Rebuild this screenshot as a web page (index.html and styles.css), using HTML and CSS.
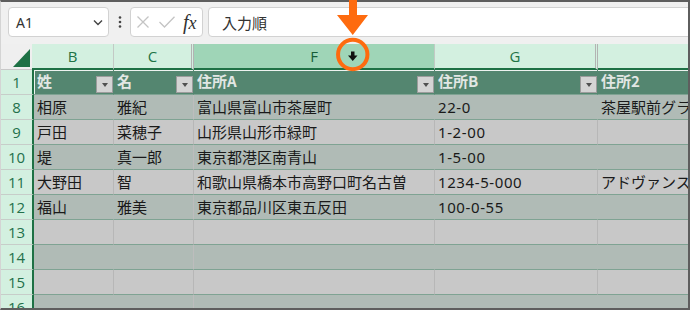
FILE: index.html
```html
<!DOCTYPE html>
<html lang="ja">
<head>
<meta charset="utf-8">
<link rel="stylesheet" href="styles.css">
</head>
<body>
<div class="stage">
  <div class="app">
    <div class="fbar">
      <div class="namebox"><span class="ref">A1</span><svg class="chev" width="10" height="7" viewBox="0 0 10 7"><polyline points="1,1.5 5,5.5 9,1.5" fill="none" stroke="#444" stroke-width="1.4"/></svg></div>
      <div class="dots"><svg width="4" height="12" viewBox="0 0 4 12"><circle cx="2" cy="1.5" r="1.3" fill="#444"/><circle cx="2" cy="6" r="1.3" fill="#444"/><circle cx="2" cy="10.5" r="1.3" fill="#444"/></svg></div>
      <div class="fxbox">
        <svg class="x-ic" width="12" height="12" viewBox="0 0 12 12"><path d="M0.5 0.5 L11.5 11.5 M11.5 0.5 L0.5 11.5" stroke="#c4c4c4" stroke-width="1.3" fill="none"/></svg>
        <svg class="ok-ic" width="16" height="12" viewBox="0 0 16 12"><polyline points="0.5,6 5.5,11 15.5,0.8" stroke="#c4c4c4" stroke-width="1.3" fill="none"/></svg>
        <span class="fx"><span class="fx-f">f</span>x</span>
      </div>
      <div class="formula">入力順</div>
    </div>

    <div class="colhead">
      <div class="corner"><svg width="31" height="25" viewBox="0 0 31 25"><polygon points="12,23 29,23 29,5" fill="#1e7145"/></svg></div>
      <div class="ch b">B</div>
      <div class="ch c">C</div>
      <div class="ch f">F</div>
      <div class="ch g">G</div>
      <div class="ch h"></div>
    </div>

    <div class="row head">
      <div class="rh">1</div>
      <div class="cell w-b"><span class="ht">姓</span><span class="fbtn"></span></div>
      <div class="cell w-c"><span class="ht">名</span><span class="fbtn"></span></div>
      <div class="cell w-f"><span class="ht">住所A</span><span class="fbtn"></span></div>
      <div class="cell w-g"><span class="ht">住所B</span><span class="fbtn"></span></div>
      <div class="cell w-h"><span class="ht">住所2</span></div>
    </div>
    <div class="row dark">
      <div class="rh">8</div>
      <div class="cell w-b">相原</div>
      <div class="cell w-c">雅紀</div>
      <div class="cell w-f">富山県富山市茶屋町</div>
      <div class="cell w-g num">22-0</div>
      <div class="cell w-h">茶屋駅前グランドハイツ</div>
    </div>
    <div class="row light">
      <div class="rh">9</div>
      <div class="cell w-b">戸田</div>
      <div class="cell w-c">菜穂子</div>
      <div class="cell w-f">山形県山形市緑町</div>
      <div class="cell w-g num">1-2-00</div>
      <div class="cell w-h"></div>
    </div>
    <div class="row dark">
      <div class="rh">10</div>
      <div class="cell w-b">堤</div>
      <div class="cell w-c">真一郎</div>
      <div class="cell w-f">東京都港区南青山</div>
      <div class="cell w-g num">1-5-00</div>
      <div class="cell w-h"></div>
    </div>
    <div class="row light">
      <div class="rh">11</div>
      <div class="cell w-b">大野田</div>
      <div class="cell w-c">智</div>
      <div class="cell w-f">和歌山県橋本市高野口町名古曽</div>
      <div class="cell w-g num">1234-5-000</div>
      <div class="cell w-h">アドヴァンスコート</div>
    </div>
    <div class="row dark">
      <div class="rh">12</div>
      <div class="cell w-b">福山</div>
      <div class="cell w-c">雅美</div>
      <div class="cell w-f">東京都品川区東五反田</div>
      <div class="cell w-g num">100-0-55</div>
      <div class="cell w-h"></div>
    </div>
    <div class="row light">
      <div class="rh">13</div>
      <div class="cell w-b"></div><div class="cell w-c"></div><div class="cell w-f"></div><div class="cell w-g"></div><div class="cell w-h"></div>
    </div>
    <div class="row dark">
      <div class="rh">14</div>
      <div class="cell w-b"></div><div class="cell w-c"></div><div class="cell w-f"></div><div class="cell w-g"></div><div class="cell w-h"></div>
    </div>
    <div class="row light">
      <div class="rh">15</div>
      <div class="cell w-b"></div><div class="cell w-c"></div><div class="cell w-f"></div><div class="cell w-g"></div><div class="cell w-h"></div>
    </div>
    <div class="row dark">
      <div class="rh">16</div>
      <div class="cell w-b"></div><div class="cell w-c"></div><div class="cell w-f"></div><div class="cell w-g"></div><div class="cell w-h"></div>
    </div>
  </div>

  <svg class="marker" width="690" height="80" viewBox="0 0 690 80">
    <path d="M349 0 H357 V15 H368 L352.75 35 L337 15 H349 Z" fill="#fe6b0f"/>
    <circle cx="352.75" cy="54.5" r="14.7" fill="none" stroke="#fe6b0f" stroke-width="4"/>
    <path d="M351 51.5 H354.5 V55.5 H357.5 L352.75 61 L348 55.5 H351 Z" fill="#111"/>
  </svg>
</div>
</body>
</html>
```

FILE: styles.css
```css
* { box-sizing: border-box; margin: 0; padding: 0; }
body { margin: 0; background: #fff; font-family: "Noto Sans CJK JP", "Noto Sans", sans-serif; }

.stage { position: relative; width: 690px; height: 310px; }
.app {
  width: 690px; height: 310px; overflow: hidden;
  border-top: 2px solid #5e5e5e; border-right: 2px solid #5e5e5e;
  border-bottom: 2px solid #5e5e5e; border-left: 1px solid #d4d4d4;
  background: #f0f0f0;
}
.marker { position: absolute; left: 0; top: 0; pointer-events: none; }

/* formula bar */
.fbar { height: 42px; display: flex; align-items: flex-start; padding: 5px 0 0 7px; }
.namebox {
  width: 101px; height: 30px; background: #fff; border: 1px solid #d2d2d2; border-radius: 4px;
  display: flex; align-items: center; justify-content: space-between; padding: 0 5px 0 7px;
}
.ref { font-family: "Noto Sans", sans-serif; font-size: 14px; color: #333; }
.dots { width: 21px; height: 30px; display: flex; align-items: center; justify-content: center; }
.fxbox {
  width: 73px; height: 30px; background: #fff; border: 1px solid #d2d2d2; border-radius: 4px;
  display: flex; align-items: center; padding-left: 6px;
}
.ok-ic { margin-left: 10px; }
.fx { margin-left: 8px; font-family: "Liberation Serif", "DejaVu Serif", serif; font-style: italic; font-size: 18px; color: #333; line-height: 1; }
.fx-f { font-size: 20px; }
.formula {
  flex: 1; margin-left: 5px; margin-right: -6px; height: 30px; background: #fff;
  border: 1px solid #d2d2d2; border-radius: 4px; padding-left: 13px;
  display: flex; align-items: center; font-size: 15px; color: #333;
}

/* column header */
.colhead { display: flex; height: 26px; }
.corner { width: 31px; height: 26px; background: #efefef; border-bottom: 1px solid #c8c8c8; flex: none; }
.corner svg { display: block; }
.ch {
  flex: none; height: 26px; background: #d3f0e0; border-bottom: 2px solid #1e7145; border-right: 1px solid #c3c9c5;
  display: flex; align-items: center; justify-content: center;
  font-family: "Open Sans", "Noto Sans", sans-serif; font-size: 15px; color: #217346;
}
.ch.b { width: 82px; }
.ch.c { width: 80px; border-right: 3px double #b3b3b3; }
.ch.f { width: 241px; background: #9fd5b7; color: #175c38; }
.ch.g { width: 163px; border-right: 3px double #b3b3b3; }
.ch.h { flex: 1; border-right: 0; }

/* rows */
.row { display: flex; height: 25px; }
.rh {
  flex: none; width: 33px; height: 25px; background: #d3f0e0;
  border-right: 2px solid #1e7145; border-bottom: 1px solid #c7cdc9;
  display: flex; align-items: center; justify-content: center;
  font-family: "Open Sans", "Noto Sans", sans-serif; font-size: 15px; color: #24704b;
}
.cell {
  flex: none; height: 25px; border-bottom: 1px solid #7fa393; border-right: 1px solid #b7b7b7;
  padding-left: 3px; font-size: 15px; line-height: 24px; color: #1a1a1a;
  white-space: nowrap; overflow: hidden;
}
.w-b { width: 80px; }
.w-c { width: 80px; }
.w-f { width: 241px; }
.w-g { width: 163px; }
.w-h { flex: 1; border-right: 0; }
.num { font-family: "Noto Sans", sans-serif; font-size: 15px; letter-spacing: 0.6px; }

.light .cell { background: #c8c8c8; }
.dark .cell { background: #b0bbb6; border-right-color: #b0bbb6; }
.dark .w-c { border-right-color: #bdbdbd; }

.head .cell {
  background: #548670; border-right-color: #548670; color: #e2e7e4; font-weight: bold;
  display: flex; justify-content: space-between; align-items: center;
  box-shadow: inset 0 1px 0 #eef3f0;
}
.head .w-b { box-shadow: inset 0 1px 0 #eef3f0, inset 1px 0 0 #eef3f0; }
.ht { margin-top: -3px; }
.fbtn {
  flex: none; width: 17px; height: 17px; align-self: flex-end; margin-bottom: 1px;
  background: #d4d4d4; border: 1px solid #9c9c9c;
  display: flex; align-items: center; justify-content: center;
}
.fbtn::after {
  content: ""; display: block; width: 0; height: 0;
  border-left: 3.5px solid transparent; border-right: 3.5px solid transparent; border-top: 4px solid #505050;
}
```
